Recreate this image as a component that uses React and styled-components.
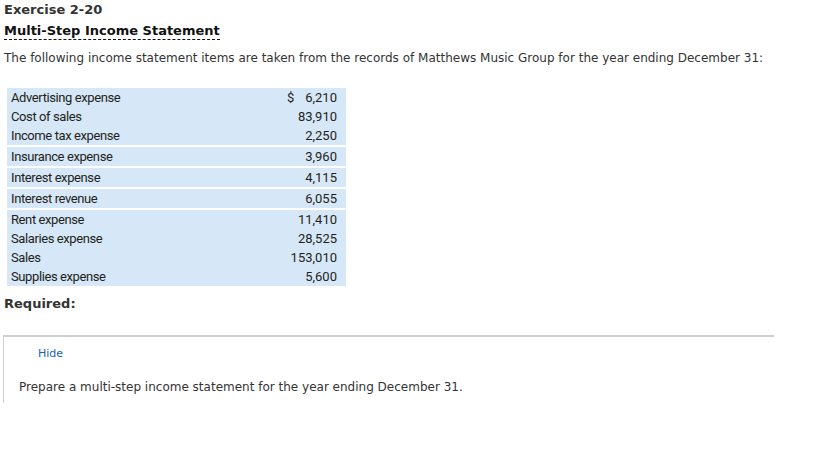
import styled, { createGlobalStyle } from 'styled-components';

const Global = createGlobalStyle`
  html, body { margin: 0; padding: 0; background: #fff; }
  body { font-family: Verdana, "DejaVu Sans", sans-serif; color: #333; }
`;

const Page = styled.div`
  padding: 0 0 0 4px;
  width: 815px;
`;

const Title = styled.h1`
  margin: 0;
  padding-top: 2px;
  font-size: 13px;
  line-height: 16px;
  font-weight: bold;
  color: #333;
`;

const Subtitle = styled.h2`
  margin: 5px 0 0;
  font-size: 13px;
  line-height: 16px;
  font-weight: bold;
  color: #111;
  display: inline-block;
  border-bottom: 1px dashed #111;
`;

const Intro = styled.p`
  margin: 10px 0 0;
  font-size: 12px;
  line-height: 16px;
  color: #333;
`;

const Items = styled.table`
  margin: 22px 0 0 3px;
  width: 339px;
  border-collapse: collapse;
  font-family: Roboto, "Liberation Sans", sans-serif;
  font-size: 13px;
  letter-spacing: -0.4px;
  color: #231f20;
`;

const Row = styled.tr`
  background: #d6e7f7;
  border-top: ${p => (p.$split ? '2px solid #fff' : 'none')};
`;

const Label = styled.td`
  height: 19px;
  padding: 0 0 0 4px;
  line-height: 19px;
`;

const Amount = styled.td`
  padding: 0 9px 0 0;
  text-align: right;
  white-space: nowrap;
  line-height: 19px;
  letter-spacing: 0;
`;

const Dollar = styled.span`
  margin-right: 11px;
`;

const Required = styled.h3`
  margin: 10px 0 0;
  font-size: 13px;
  line-height: 16px;
  font-weight: bold;
  color: #333;
`;

const Panel = styled.div`
  box-sizing: border-box;
  margin: 23px 0 0 -1px;
  width: 771px;
  border-top: 2px solid #cfcfcf;
  border-left: 1px solid #cfcfcf;
  padding: 10px 0 8px 15px;
`;

const HideLink = styled.a`
  display: block;
  margin-left: 19px;
  font-size: 11px;
  line-height: 14px;
  color: #1a5fb4;
  text-decoration: none;
  cursor: pointer;
`;

const Task = styled.p`
  margin: 18px 0 0;
  font-size: 12px;
  line-height: 16px;
  color: #333;
`;

const ITEMS = [
  { label: 'Advertising expense', amount: '6,210', dollar: true },
  { label: 'Cost of sales', amount: '83,910' },
  { label: 'Income tax expense', amount: '2,250' },
  { label: 'Insurance expense', amount: '3,960', split: true },
  { label: 'Interest expense', amount: '4,115', split: true },
  { label: 'Interest revenue', amount: '6,055', split: true },
  { label: 'Rent expense', amount: '11,410', split: true },
  { label: 'Salaries expense', amount: '28,525' },
  { label: 'Sales', amount: '153,010' },
  { label: 'Supplies expense', amount: '5,600' },
];

export default function App() {
  return (
    <Page>
      <Global />
      <Title>Exercise 2-20</Title>
      <Subtitle>Multi-Step Income Statement</Subtitle>
      <Intro>
        The following income statement items are taken from the records of Matthews Music Group for the year ending December 31:
      </Intro>
      <Items>
        <tbody>
          {ITEMS.map(item => (
            <Row key={item.label} $split={item.split}>
              <Label>{item.label}</Label>
              <Amount>
                {item.dollar && <Dollar>$</Dollar>}
                {item.amount}
              </Amount>
            </Row>
          ))}
        </tbody>
      </Items>
      <Required>Required:</Required>
      <Panel>
        <HideLink>Hide</HideLink>
        <Task>Prepare a multi-step income statement for the year ending December 31.</Task>
      </Panel>
    </Page>
  );
}
